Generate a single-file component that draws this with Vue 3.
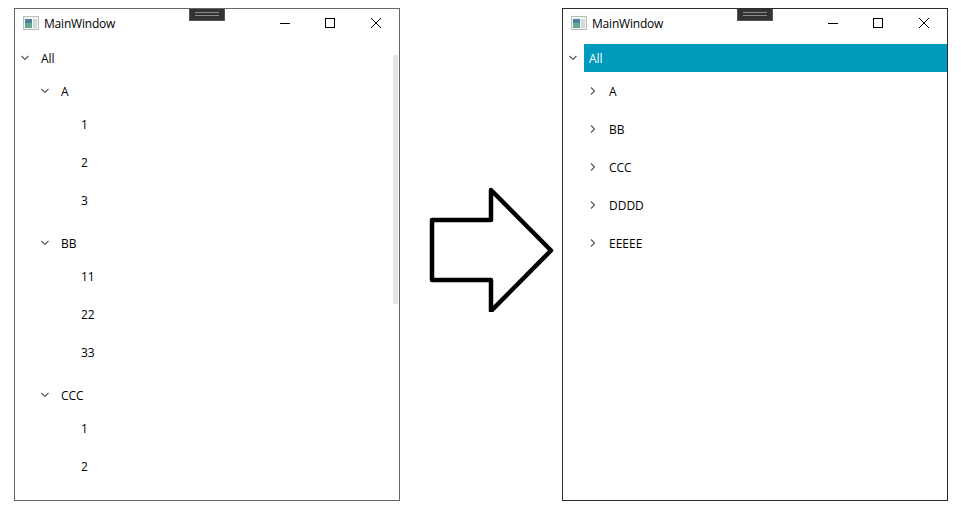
<script setup>
const leftTree = [
  { name: 'A', open: true, items: ['1', '2', '3'] },
  { name: 'BB', open: true, items: ['11', '22', '33'] },
  { name: 'CCC', open: true, items: ['1', '2'] }
]
const rightTree = ['A', 'BB', 'CCC', 'DDDD', 'EEEEE'].map(name => ({ name, open: false, items: [] }))

const windows = [
  { id: 'before', tree: leftTree, selected: false, scrollbar: true },
  { id: 'after', tree: rightTree, selected: true, scrollbar: false }
]
</script>

<template>
  <div class="page">
    <template v-for="(win, i) in windows" :key="win.id">
      <section class="window" :class="win.id">
        <div class="grip"><span></span></div>

        <header class="titlebar">
          <svg class="app-icon" width="16" height="14" viewBox="0 0 16 14">
            <rect x="0.5" y="0.5" width="15" height="13" fill="#f1f3f3" stroke="#b9bdbe" />
            <rect x="2" y="3" width="7" height="9" fill="#62a894" />
            <rect x="2" y="3" width="7" height="4" fill="#4f7f9f" />
            <rect x="10" y="3" width="4" height="9" fill="#cfdcd6" />
          </svg>
          <span class="title">MainWindow</span>
          <div class="controls">
            <svg width="46" height="36" viewBox="0 0 46 36"><path d="M19 14.500h10" stroke="#000" fill="none" /></svg>
            <svg width="46" height="36" viewBox="0 0 46 36"><rect x="18.500" y="9.500" width="9" height="9" stroke="#000" fill="none" /></svg>
            <svg width="46" height="36" viewBox="0 0 46 36"><path d="M18 9l10 10M28 9L18 19" stroke="#000" fill="none" /></svg>
          </div>
        </header>

        <div class="tree">
          <div class="row">
            <span class="toggle">
              <svg width="8" height="6" viewBox="0 0 8 6"><path d="M0.5 1l3.5 3.5L7.500 1" class="chev" /></svg>
            </span>
            <span class="label" :class="{ selected: win.selected }">All</span>
          </div>

          <div v-for="group in win.tree" :key="group.name" class="group" :class="{ open: group.open }">
            <div class="row">
              <span class="toggle">
                <svg v-if="group.open" width="8" height="6" viewBox="0 0 8 6"><path d="M0.5 1l3.5 3.5L7.500 1" class="chev" /></svg>
                <svg v-else width="6" height="8" viewBox="0 0 6 8"><path d="M1 0.500l3.500 3.500L1 7.500" class="chev" /></svg>
              </span>
              <span class="label">{{ group.name }}</span>
            </div>
            <div v-if="group.open" class="leaves">
              <div v-for="(leaf, n) in group.items" :key="n" class="row leaf">
                <span class="label">{{ leaf }}</span>
              </div>
            </div>
          </div>
        </div>

        <div v-if="win.scrollbar" class="scrollbar"></div>
      </section>

      <div v-if="i === 0" class="arrow">
        <svg width="162" height="130" viewBox="0 0 162 130">
          <path d="M32 38H91V8L151 68.500 91 129V98H32Z" fill="#fff" stroke="#000" stroke-width="4.500" stroke-linejoin="round" />
        </svg>
      </div>
    </template>
  </div>
</template>

<style>
html, body {
  margin: 0;
  background: #fff;
}
</style>

<style scoped>
.page {
  display: flex;
  align-items: flex-start;
  padding: 8px 0 0 14px;
  font-family: "Open Sans", "Noto Sans", sans-serif;
  font-size: 12px;
  color: #000;
}

.window {
  position: relative;
  box-sizing: border-box;
  width: 386px;
  height: 493px;
  border: 1px solid #666;
  background: #fff;
  overflow: hidden;
  flex: none;
}

.window.after {
  border-color: #2b2b2b;
}

.grip {
  position: absolute;
  top: 0;
  left: 174px;
  width: 36px;
  height: 12px;
  box-sizing: border-box;
  background: #333;
  border: 1px solid #555;
  border-top: 0;
  display: flex;
  justify-content: center;
  padding-top: 3px;
}

.grip span {
  display: block;
  width: 24px;
  height: 4px;
  box-sizing: border-box;
  border-top: 1px solid #8a8a8a;
  border-bottom: 1px solid #8a8a8a;
}

.titlebar {
  box-sizing: border-box;
  height: 35px;
  display: flex;
  align-items: center;
  padding: 0 0 7px 8px;
}

.app-icon {
  flex: none;
}

.title {
  margin-left: 5px;
  flex: 1;
  letter-spacing: -0.2px;
}

.controls {
  display: flex;
  align-self: flex-start;
}

.controls svg {
  display: block;
}

.tree {
  display: flex;
  flex-direction: column;
}

.row {
  display: flex;
  align-items: center;
  height: 28px;
}

.toggle {
  flex: none;
  width: 20px;
  margin-right: 1px;
  display: flex;
  justify-content: center;
}

.chev {
  fill: none;
  stroke: #555;
  stroke-width: 1.1;
}

.label {
  flex: 1;
  height: 28px;
  line-height: 30px;
  padding-left: 5px;
}

.label.selected {
  background: #009abd;
  color: #fff;
}

.group {
  margin: 5px 0 5px 20px;
}

.group.open {
  margin-bottom: 9px;
}

.leaves {
  margin-top: 6px;
}

.leaf {
  padding-left: 41px;
  margin-bottom: 10px;
}

.leaf:last-child {
  margin-bottom: 0;
}

.leaf .label {
  line-height: 28px;
}

.scrollbar {
  position: absolute;
  top: 46px;
  right: 1px;
  width: 5px;
  height: 249px;
  background: #e6e6e6;
}

.arrow {
  flex: none;
  width: 162px;
  margin-top: 174px;
}

.arrow svg {
  display: block;
}
</style>
